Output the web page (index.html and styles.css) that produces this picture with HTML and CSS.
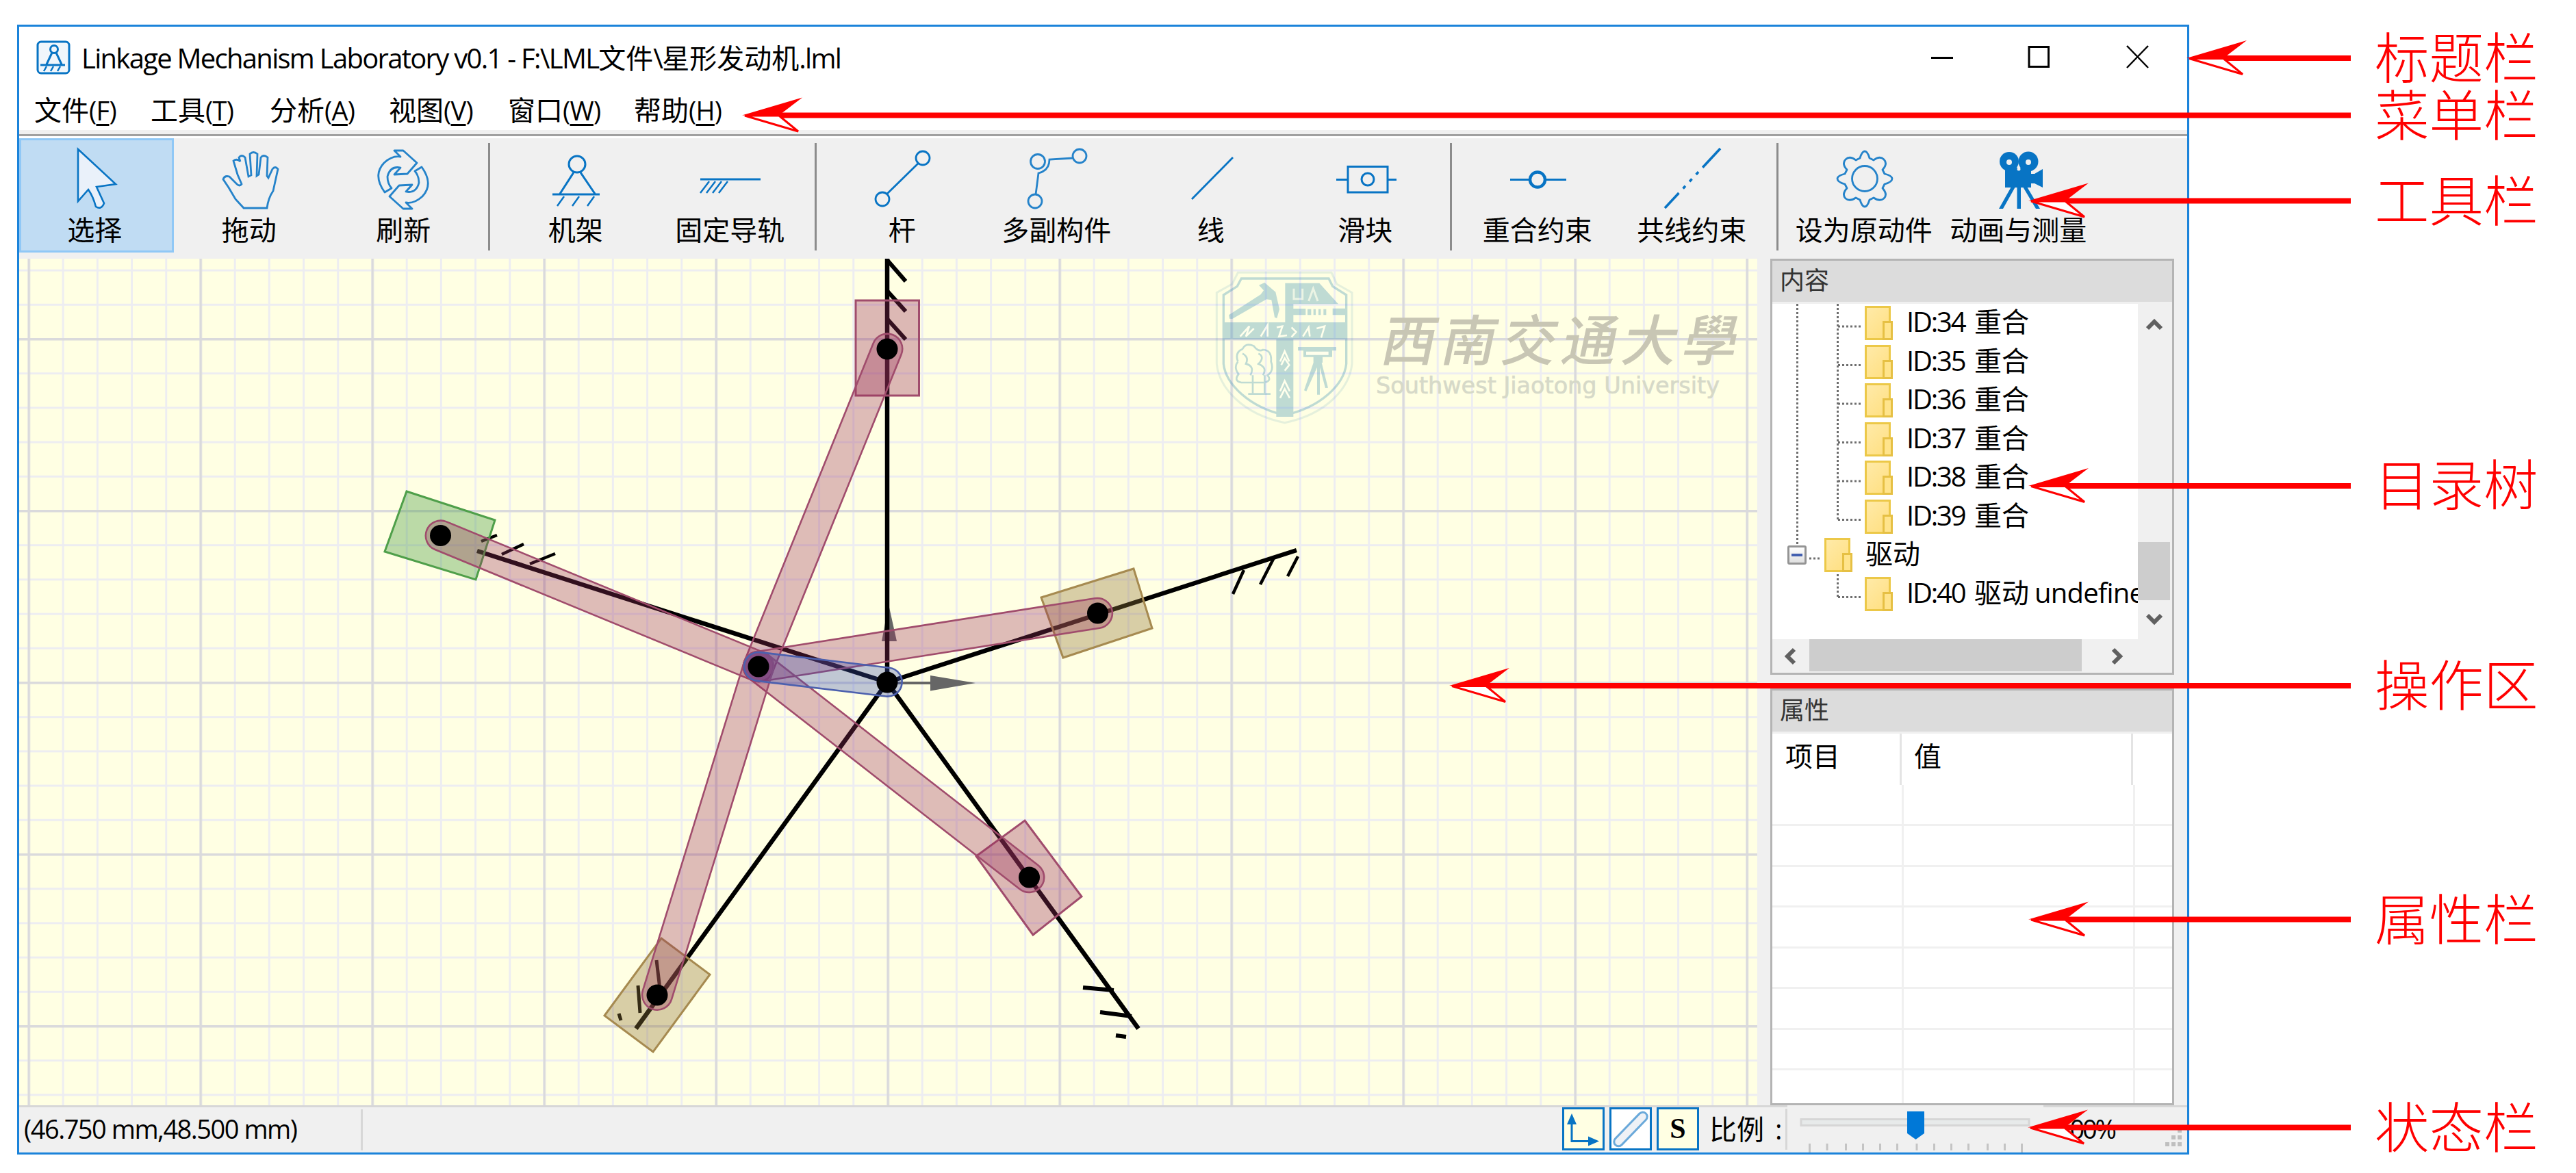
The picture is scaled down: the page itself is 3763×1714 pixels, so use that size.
FILE: index.html
```html
<!DOCTYPE html>
<html lang="zh-CN">
<head>
<meta charset="utf-8">
<title>Linkage Mechanism Laboratory</title>
<link rel="stylesheet" href="styles.css">
</head>
<body>
<main class="window">
  <header class="titlebar">
    <svg class="app-icon" viewBox="0 0 50 50"><rect x="2" y="2" width="46" height="46" rx="5" fill="#f0f6fb" stroke="#0874c4" stroke-width="3"/><g fill="none" stroke="#0874c4" stroke-width="3"><circle cx="26" cy="13" r="5.5"/><path d="M23 18 15 35M29 18 37 35M6 36H42"/><path d="M15 38 11 45M25 38 21 45M35 38 31 45" stroke-width="2.5"/></g></svg>
    <span class="title">Linkage Mechanism Laboratory v0.1 - F:\LML<span class="han">文件</span>\<span class="han">星形发动机</span>.lml</span>
    <svg class="controls" viewBox="0 0 330 40"><g fill="none" stroke="#000" stroke-width="3"><path d="M4 21.5H36"/><rect x="147" y="5.500" width="28.500" height="29"/><path d="M290 4 321 36M321 4 290 36" stroke-width="2.500"/></g></svg>
  </header>
  <nav class="menu">
    <span>文件<i>(<u>F</u>)</i></span><span>工具<i>(<u>T</u>)</i></span><span>分析<i>(<u>A</u>)</i></span><span>视图<i>(<u>V</u>)</i></span><span>窗口<i>(<u>W</u>)</i></span><span>帮助<i>(<u>H</u>)</i></span>
  </nav>
  <div class="rebar"></div>
  <section class="toolbar">
    <div class="tool selected"><svg viewBox="0 0 120 96"><path d="M36 7V83L51 66Q58 76 62 91Q70 96 74 86L63 62L91 58Z" fill="#eaf1fa" stroke="#0874c4" stroke-width="2.600"/></svg><b>选择</b></div>
    <div class="tool"><svg viewBox="0 0 120 96"><path d="M52 93H86Q88 78 95 68Q99 50 102 36Q98 31 94 36L88 49L86 46L87 19Q81 14 77 19L74 44L71 46L72 14Q66 9 61 14L63 45L59 47L54 19Q49 14 45 19L47 25Q42 20 37 24L43 44L49 58Q46 62 42 58L31 47Q24 45 22 51L30 63L40 80Z" fill="none" stroke="#2583ca" stroke-width="2.800"/></svg><b>拖动</b></div>
    <div class="tool"><svg viewBox="0 0 120 96"><g fill="none" stroke="#2583ca" stroke-width="2.800" stroke-linejoin="round"><path d="M33 70Q15 45 32 27Q44 16 56 18L47 9H60L80 27L66 43L47 44L56 34Q41 31 37 47Q37 57 43 64Z"/><path d="M33 70Q15 45 32 27Q44 16 56 18L47 9H60L80 27L66 43L47 44L56 34Q41 31 37 47Q37 57 43 64Z" transform="rotate(180 60 51.500)"/></g></svg><b>刷新</b></div>
    <hr>
    <div class="tool"><svg viewBox="0 0 120 96"><g fill="none" stroke="#0874c4" stroke-width="3"><circle cx="62" cy="29" r="12"/><path d="M57 41 37 72M67 41 88 72M26 73H95"/><path d="M43 76 33 90M65 76 55 90M87 76 77 90" stroke-width="2.500"/></g></svg><b>机架</b></div>
    <div class="tool"><svg viewBox="0 0 120 96"><g fill="none" stroke="#0874c4" stroke-width="3"><path d="M17 51H105"/><path d="M30 54 17 71M39 54 26 71M48 54 35 71M57 54 44 71" stroke-width="2.500"/></g></svg><b>固定导轨</b></div>
    <hr>
    <div class="tool"><svg viewBox="0 0 120 96"><g fill="none" stroke="#0874c4" stroke-width="2.800"><circle cx="90" cy="20" r="10"/><circle cx="31" cy="80" r="10"/><path d="M83 28 38 72"/></g></svg><b>杆</b></div>
    <div class="tool"><svg viewBox="0 0 120 96"><g fill="none" stroke="#2583ca" stroke-width="2.800"><circle cx="33" cy="25" r="10.500"/><circle cx="94" cy="17" r="10"/><circle cx="29" cy="83" r="10"/><path d="M30 73 34 42Q50 38 50 22L84 20"/></g></svg><b>多副构件</b></div>
    <div class="tool"><svg viewBox="0 0 120 96"><path d="M32 80 92 19" stroke="#0874c4" stroke-width="2.800"/></svg><b>线</b></div>
    <div class="tool"><svg viewBox="0 0 120 96"><g fill="none" stroke="#0874c4" stroke-width="3"><rect x="35" y="32.500" width="58" height="37.500"/><circle cx="64" cy="51" r="9"/><path d="M18 51.500H35M93 51.500H106"/></g></svg><b>滑块</b></div>
    <hr>
    <div class="tool"><svg viewBox="0 0 120 96"><g fill="none" stroke="#0874c4" stroke-width="3"><path d="M20 51.500H47M73 51.500H102"/><circle cx="60" cy="51.500" r="11" stroke-width="4.500"/></g></svg><b>重合约束</b></div>
    <div class="tool"><svg viewBox="0 0 120 96"><path d="M21 93 102 6" stroke="#0874c4" stroke-width="3.600" stroke-dasharray="30 9 5 9 5 9 5 9 42"/></svg><b>共线约束</b></div>
    <hr>
    <div class="tool"><svg viewBox="0 0 120 96"><g fill="none" stroke="#2583ca" stroke-width="2.800" stroke-linejoin="round"><circle cx="61" cy="50" r="18.500"/><path d="M54 20Q57 10 61 10Q65 10 68 20L74 23Q83 16 89 22Q95 28 87 37L90 43Q101 46 101 50Q101 55 90 58L87 64Q95 73 89 79Q83 84 74 78L68 81Q65 91 61 91Q57 91 54 81L48 78Q39 84 33 79Q27 73 35 64L32 58Q21 55 21 50Q21 46 32 43L35 37Q27 28 33 22Q39 16 48 23Z"/></g></svg><b>设为原动件</b></div>
    <div class="tool"><svg viewBox="0 0 120 96"><g fill="#0874c4"><circle cx="47" cy="25" r="14"/><circle cx="75" cy="25" r="14.500"/><rect x="41" y="34" width="38" height="29"/><path d="M79 43H84L96 36V63L84 57H79Z"/><path d="M50 62H56L38 94H32ZM58.500 62H64V94H58.500ZM67 62H73L92 94H86Z"/></g><g fill="#f0f0f0"><circle cx="47" cy="26" r="4"/><circle cx="75" cy="26" r="4"/><circle cx="61" cy="36" r="2.500"/></g></svg><b>动画与测量</b></div>
  </section>
  <section class="workspace">
    <svg class="canvas" viewBox="28 378 2539 1237">
      <defs>
        <pattern id="minor" x="40.500" y="494" width="50.200" height="50.200" patternUnits="userSpaceOnUse"><path d="M0 0H50.200M0 0V50.200" stroke="#ededf1" stroke-width="6"/></pattern>
        <pattern id="major" x="40.500" y="494" width="251" height="251" patternUnits="userSpaceOnUse"><path d="M0 0H251M0 0V251" stroke="#dadadc" stroke-width="7"/></pattern>
      </defs>
      <rect x="28" y="378" width="2539" height="1237" fill="#ffffe3"/>
      <rect x="28" y="378" width="2539" height="1237" fill="url(#minor)"/>
      <rect x="28" y="378" width="2539" height="1237" fill="url(#major)"/>
      <g transform="translate(1770 385) scale(.33333)" opacity=".32" fill="none" stroke="#3b92b4">
        <path d="M115 40H525L548 90 615 128V440C605 540 510 660 320 698C130 660 32 540 22 440V128L90 90Z" stroke-width="9" opacity=".4"/>
        <path d="M130 66H513L530 100 590 138V440C580 530 480 630 320 665C165 630 62 530 52 440V138L112 100Z" stroke-width="10"/>
        <g fill="#3b92b4" stroke="none"><path d="M50 258H322V86H472L555 178H358V198H412V226H358V258H590V333H358V672H283V333H50Z"/><path d="M530 197H590V226H530ZM75 226 215 136 228 118 207 95 232 84 280 125 297 200 286 240 276 236 262 160 240 157 90 243 78 242Z"/><path d="M420 200H436V226H420ZM446 200H456V226H446ZM468 200H478V226H468ZM490 200H502V226H490ZM378 366H546V382H528V410H486V435H482L510 545 498 546 474 455V575H462V455L415 560 405 556 446 435V410H402V382H378Z"/></g>
        <path d="M414 386H512V401H414Z" fill="#fff" stroke="none"/>
        <g stroke-width="8"><path d="M115 430Q100 390 135 375Q150 345 185 362Q205 390 225 378Q265 380 260 430Q275 470 245 490Q265 515 230 522H130Q95 515 118 485Q95 455 115 430M135 395Q165 410 150 440Q190 450 170 490M205 395Q235 410 205 440Q245 455 225 490M180 490V575M232 490V575M160 572H258"/></g>
        <g stroke="#fff" stroke-width="8"><path d="M125 320 165 275 150 320 185 285M215 320 245 270 245 320M285 280 310 275 295 320 330 315M350 280 370 300 350 322M400 320 425 280 430 320M460 285 495 275 480 325M300 430 320 385 340 430M305 445 320 415 340 445 320 470M300 560 320 515 342 560M300 590 320 550 342 590"/><path d="M360 110V155H398V110M425 165 445 110 465 165" stroke-width="9" opacity=".7"/></g>
      </g>
      <text class="wm-han" x="0" y="0" transform="translate(2014 527) skewX(-12)" textLength="520">西南交通大學</text>
      <text class="wm-latin" x="2010" y="575" textLength="502" lengthAdjust="spacingAndGlyphs">Southwest Jiaotong University</text>

      <g class="axis"><path d="M1299 998H1362" stroke="#666" stroke-width="4"/><path d="M1359 987 1425 998 1359 1009.500ZM1288 937 1298 883 1310 937Z" fill="#666"/></g>
      <g fill="none" stroke="#000" stroke-width="6.500">
        <path d="M1296 378V997L697 805M1296 997 1894 804M1296 997 1663 1503M1296 997 929 1503"/>
        <path d="M1296 380 1323 411M1296 425 1323 455M1296 466 1323 496" stroke-width="6"/>
        <path d="M703 791 726 782M733 810 765 795M774 824 811 809M1817 833 1801 868M1861 815 1841 854M1896 813 1881 842" stroke-width="4.500"/>
        <path d="M1627 1447 1582 1443M1653 1485 1607 1479M1630 1513 1645 1515" stroke-width="6"/>
        <path d="M964 1445 959 1403M935 1480 932 1440M904 1481 907 1491" stroke-width="5"/>
      </g>
      <g stroke-width="3">
        <g fill="#98305a" fill-opacity=".34" stroke="#a04c6c"><rect x="1250" y="439" width="92.500" height="139"/><path d="M1497 1199 1580 1310 1509 1366 1426 1251Z"/></g>
        <path d="M594 718 723 760 695 847 562 806Z" fill="#3c9636" fill-opacity=".35" stroke="#4f9f4a"/>
        <path d="M1656 831 1683 918 1553 961 1521 873ZM966 1371 1037 1424 954 1537 883 1484Z" fill="#94783a" fill-opacity=".36" stroke="#a68a50"/>
      </g>
      <g transform="translate(1108 974)" stroke-width="2.600" fill="#98305a" fill-opacity=".32" stroke="#a04c6c">
        <rect x="-22" y="-22" width="545" height="44" rx="22" transform="rotate(-67.940)"/>
        <rect x="-22" y="-22" width="546" height="44" rx="22" transform="rotate(202.400)"/>
        <rect x="-22" y="-22" width="545" height="44" rx="22" transform="rotate(-8.960)"/>
        <rect x="-22" y="-22" width="545" height="44" rx="22" transform="rotate(37.920)"/>
        <rect x="-22" y="-22" width="546" height="44" rx="22" transform="rotate(107.140)"/>
        <rect x="-21" y="-21" width="232" height="42" rx="21" transform="rotate(6.830)" fill="#3a50b0" stroke="#4c60ae"/>
      </g>
      <g fill="#000"><circle cx="1296" cy="997" r="15.500"/><circle cx="1108" cy="974" r="15.500"/><circle cx="1296" cy="510" r="15.500"/><circle cx="643.500" cy="782.500" r="15.500"/><circle cx="1603.500" cy="896" r="15.500"/><circle cx="1503.500" cy="1282" r="15.500"/><circle cx="960" cy="1454" r="15.500"/></g>
    </svg>
    <aside class="dock">
      <section class="panel tree-panel">
        <h2>内容</h2>
        <div class="tree-body">
          <div class="tree">
            <svg class="guides" viewBox="0 0 534 489"><g fill="none" stroke="#6e6e6e" stroke-width="3" stroke-dasharray="3 3"><path d="M36.500 0V355M95.500 0V317M95.500 395V429"/><path d="M96 33H130M96 89.500H130M96 146H130M96 202.500H130M96 259H130M96 315.500H130M54 372H70M96 428.500H130"/></g></svg>
            <div class="row leaf"><i class="folder"></i><span class="id">ID:34</span><span>重合</span></div>
            <div class="row leaf"><i class="folder"></i><span class="id">ID:35</span><span>重合</span></div>
            <div class="row leaf"><i class="folder"></i><span class="id">ID:36</span><span>重合</span></div>
            <div class="row leaf"><i class="folder"></i><span class="id">ID:37</span><span>重合</span></div>
            <div class="row leaf"><i class="folder"></i><span class="id">ID:38</span><span>重合</span></div>
            <div class="row leaf"><i class="folder"></i><span class="id">ID:39</span><span>重合</span></div>
            <div class="row branch"><i class="toggle"></i><i class="folder"></i><span>驱动</span></div>
            <div class="row leaf"><i class="folder"></i><span class="id">ID:40</span><span>驱动</span><span class="state">undefined</span></div>
          </div>
          <div class="vscroll"><svg viewBox="0 0 24 20"><path d="M2 17 12 7 22 17" /></svg><div class="vthumb"></div><svg viewBox="0 0 24 20"><path d="M2 3 12 13 22 3"/></svg></div>
        </div>
        <div class="hscroll"><svg viewBox="0 0 20 24"><path d="M17 2 7 12 17 22"/></svg><div class="hthumb"></div><svg viewBox="0 0 20 24"><path d="M3 2 13 12 3 22"/></svg></div>
      </section>
      <section class="panel prop-panel">
        <h2>属性</h2>
        <div class="prop-head"><span>项目</span><span>值</span><span></span></div>
        <div class="prop-grid">
          <div></div><div></div><div></div><div></div><div></div><div></div><div></div>
        </div>
      </section>
    </aside>
  </section>
  <footer class="status">
    <span class="coords">(46.750 mm,48.500 mm)</span>
    <div class="toggles">
      <svg class="cream" viewBox="0 0 62 63"><g stroke="#0874c4" stroke-width="3" fill="#0874c4"><path d="M14 18V49.500H44" fill="none"/><path d="M14 9 21 25H7ZM54 49.500 38 56.500V42.500Z" stroke="none"/></g></svg>
      <svg viewBox="0 0 62 63"><rect x="-32" y="-6.500" width="64" height="13" rx="6.500" transform="translate(31 32) rotate(-46)" fill="#eef1f6" stroke="#6aa9da" stroke-width="3"/></svg>
      <span class="snap cream">S</span>
    </div>
    <span class="ratio">比例<em>:</em></span>
    <svg class="slider" viewBox="2612 1618 374 66"><rect x="2612" y="1615" width="374" height="69" fill="#f0f0f0"/><rect x="2632" y="1635.500" width="333" height="9" fill="#e7eaea" stroke="#d6d6d6" stroke-width="3"/><path d="M2644.500 1671V1684M2670 1671V1681M2697.500 1671V1681M2722.500 1671V1681M2747.500 1671V1681M2772.500 1671V1681M2801 1671V1681M2826.500 1671V1681M2851.500 1671V1681M2876.500 1671V1681M2904.500 1671V1681M2929.500 1671V1681M2954.500 1671V1684" stroke="#c4c4c4" stroke-width="3"/><path d="M2787 1624H2812V1656L2799.500 1665 2787 1656Z" fill="#0078d7"/></svg>
    <span class="percent">100%</span>
    <svg class="grip" viewBox="0 0 28 28"><path d="M20 1H26V7H20ZM20 11H26V17H20ZM11 11H17V17H11ZM20 21H26V27H20ZM11 21H17V27H11ZM2 21H8V27H2Z" fill="#bfbfbf"/></svg>
  </footer>
</main>

<svg class="callouts" viewBox="0 0 3763 1714">
  <defs><g id="head"><path d="M0 0 88 -26 54 0Z" fill="red"/><path d="M4 .500 82 23.500 54 .500Z" fill="#fff" stroke="red" stroke-width="3"/></g></defs>
  <path d="M3248 85H3434M1138 168.500H3434M3017 293.500H3434M3017 710H3434M2171 1002H3434M3017 1343.500H3434M3017 1647.500H3434" stroke="red" stroke-width="8"/>
  <use href="#head" x="3194" y="85"/><use href="#head" x="1084" y="168.500"/><use href="#head" x="2963" y="293.500"/><use href="#head" x="2963" y="710"/><use href="#head" x="2117" y="1002"/><use href="#head" x="2963" y="1343.500"/><use href="#head" x="2962" y="1647.500"/>
  <g class="labels"><text x="3469" y="114">标题栏</text><text x="3469" y="198">菜单栏</text><text x="3469" y="323">工具栏</text><text x="3469" y="738">目录树</text><text x="3469" y="1031">操作区</text><text x="3469" y="1373">属性栏</text><text x="3469" y="1677">状态栏</text></g>
</svg>
</body>
</html>
```
FILE: styles.css
```css
* { box-sizing: border-box; }
body {
  position: relative;
  width: 3763px;
  height: 1714px;
  margin: 0;
  padding: 36px 0 0 25px;
  background: #fff;
  color: #000;
  overflow: hidden;
  font-family: "Open Sans", "Noto Sans CJK SC", sans-serif;
  font-size: 40px;
  line-height: 1;
}
svg { display: block; flex: none; overflow: visible; }
i, em { font-style: normal; }

.window {
  display: flex;
  flex-direction: column;
  width: 3173px;
  height: 1651px;
  border: 3px solid #1b83da;
  background: #f0f0f0;
}
.titlebar {
  display: flex;
  align-items: center;
  height: 91px;
  padding: 0 48px 0 25px;
  background: #fff;
}
.app-icon { width: 50px; height: 50px; margin-bottom: 2px; }
.title { margin-left: 16px; flex: 1; white-space: nowrap; letter-spacing: -1.72px; }
.title .han { letter-spacing: 0; }
.controls { width: 330px; height: 40px; margin-bottom: 3px; }

.menu {
  display: flex;
  height: 60px;
  padding: 8px 0 0 22px;
  background: #fff;
}
.menu span { display: flex; align-items: center; width: 170px; height: 46px; }
.menu span:nth-child(n+2) { width: 174px; }
.menu span:nth-child(4) { width: 174px; }
.menu span:nth-child(5) { width: 184px; }
.menu i { display: inline-block; letter-spacing: -.7px; font-size: 38px; }
.menu u { text-decoration-thickness: 3px; text-underline-offset: 5px; }
.rebar { height: 12px; background: linear-gradient(#f0f0f0 6px, #a0a0a0 6px 9px, #fff 9px); }

.toolbar { display: flex; height: 176px; }
.tool {
  display: flex;
  flex-direction: column;
  align-items: center;
  width: 225.5px;
  height: 167px;
  padding: 9px 5px 0 0;
}
.tool svg { width: 120px; height: 96px; }
.tool b { margin-top: 9px; font-weight: 400; white-space: nowrap; }
.tool.selected { padding-top: 6px; border: 3px solid #90c8f6; background: #c0dcf3; }
.toolbar hr { width: 3px; height: 157px; margin: 7px 14.500px 0 8.500px; border: 0; background: #8c8c8c; }

.workspace { display: flex; height: 1237px; }
.canvas { width: 2539px; height: 1237px; overflow: hidden; }
.wm-han { font-size: 80px; font-weight: 500; fill: #c8c6b4; }
.wm-latin { font-family: "DejaVu Sans", sans-serif; font-size: 33px; fill: #d6d9c8; stroke: #d6d9c8; stroke-width: .6px; }

.dock { display: flex; flex-direction: column; gap: 20px; width: 590px; margin-left: 19px; }
.panel { display: flex; flex-direction: column; border: 3px solid #b4b4b4; background: #fff; }
.panel h2 {
  flex: none;
  height: 63px;
  margin: 0;
  padding: 11px 0 0 11px;
  border-bottom: 3px solid #f0f0f0;
  background: #dcdcdc;
  color: #333;
  font-size: 36px;
  font-weight: 400;
  line-height: 36px;
}
.tree-panel { height: 608px; }
.tree-body { display: flex; height: 490px; }
.tree { position: relative; width: 534px; overflow: hidden; }
.guides { position: absolute; inset: 0; width: 534px; height: 489px; }
.row { position: relative; display: flex; align-items: center; height: 56.500px; white-space: nowrap; }
.row > * { flex: none; }
.row span { margin-bottom: 4px; }
.row.leaf { padding-left: 135px; }
.row.branch { padding-left: 22px; }
.folder {
  position: relative;
  width: 38px;
  height: 50px;
  border: 3px solid #ecc848;
  background: linear-gradient(135deg, #ffeaa8, #ffdf80);
}
.folder::after {
  content: "";
  position: absolute;
  right: -6px;
  bottom: -3px;
  width: 9px;
  height: 22px;
  border: 3px solid #e6c044;
  background: #ffe48c;
}
.leaf .folder { margin-right: 23px; }
.branch .folder { margin: 0 22px 0 26px; }
.toggle {
  width: 28px;
  height: 28px;
  border: 3px solid #949494;
  border-radius: 3px;
  background: linear-gradient(#4460b0, #4460b0) center / 16px 4px no-repeat, linear-gradient(#fff, #e0e0e0);
}
.id { width: 99px; letter-spacing: -2.200px; }
.state { margin-left: 8px; letter-spacing: -.8px; }
.vscroll { display: flex; flex-direction: column; align-items: center; width: 50px; margin-top: -3px; padding-top: 22px; background: #f0f0f0; }
.vscroll svg { width: 24px; height: 20px; margin-right: 3px; }
.vscroll path, .hscroll path { fill: none; stroke: #606060; stroke-width: 6px; }
.vthumb { width: 47px; height: 85px; margin: 309px 3px 19px 0; background: #cdcdcd; }
.hscroll { display: flex; align-items: center; height: 49px; padding-left: 15px; background: #f0f0f0; }
.hscroll svg { width: 20px; height: 24px; }
.hthumb { width: 398px; height: 47px; margin: 0 43px 2px 19px; background: #cdcdcd; }

.prop-panel { height: 609px; }
.prop-head { display: grid; grid-template-columns: 189px 338px 1fr; height: 75px; }
.prop-head span { padding: 13px 0 0 18px; border-right: 3px solid #e4e4e4; }
.prop-head span:first-child { padding-left: 19px; }
.prop-head span:last-child { border: 0; }
.prop-grid {
  display: grid;
  grid-template-rows: 60px repeat(6, 59.500px);
  flex: 1;
  overflow: hidden;
  background: linear-gradient(#f0f0f0, #f0f0f0) 189px 0 / 3px 100% no-repeat, linear-gradient(#f0f0f0, #f0f0f0) 527px 0 / 3px 100% no-repeat;
}
.prop-grid div { border-bottom: 3px solid #f0f0f0; }

.status { display: flex; height: 69px; border-top: 3px solid #d7d7d7; }
.coords {
  width: 502px;
  height: 60px;
  margin-top: 3px;
  padding: 9px 0 0 7px;
  border-right: 3px solid #d7d7d7;
  font-size: 38px;
  letter-spacing: -1.500px;
  white-space: nowrap;
}
.toggles { display: flex; gap: 7px; margin-left: 1752px; }
.toggles svg, .snap { width: 62px; height: 63px; outline: 3px solid #0874c4; outline-offset: -3px; background: #fff; }
.toggles .cream { background: #ffffe3; }
.snap { font: 700 42px/62px "Liberation Serif", serif; text-align: center; }
.ratio { display: flex; align-items: center; width: 129px; height: 60px; margin-top: 2px; padding-left: 15px; border-right: 3px solid #d7d7d7; }
.ratio em { margin-left: 16px; }
.slider { width: 374px; height: 66px; }
.percent { width: 150px; padding: 12px 0 0 20px; font-size: 38px; letter-spacing: -3.200px; }
.grip { width: 28px; height: 28px; margin: 30px 0 0 26px; }

.callouts { position: absolute; top: 0; left: 0; width: 3763px; height: 1714px; }
.labels { fill: red; font-size: 79.500px; font-weight: 300; }
```
